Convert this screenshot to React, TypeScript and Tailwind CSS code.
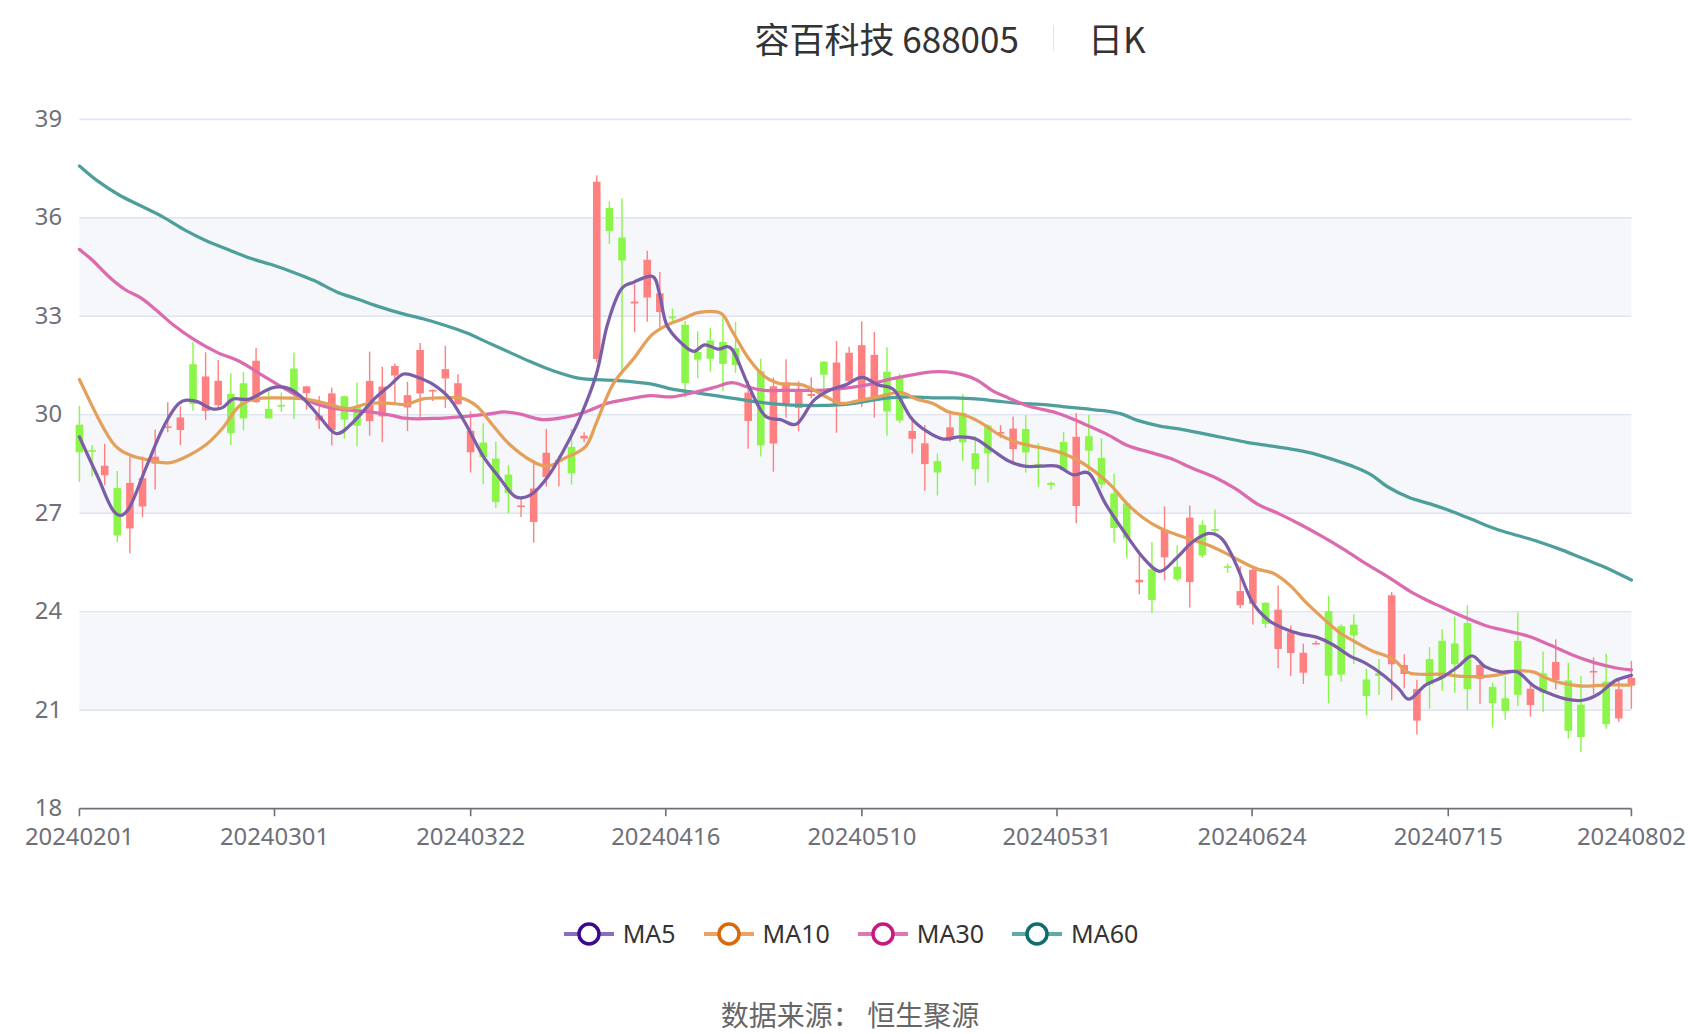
import React from "react";

type P = [number, number];
const ma5: P[] = [[73,403],[90,440],[105,472],[118,470],[135,430],[150,395],[165,372],[180,370],[195,377],[205,376],[215,368],[230,368],[250,358],[265,358],[280,368],[295,385],[310,400],[325,390],[345,368],[360,355],[372,345],[385,348],[400,355],[415,368],[430,392],[445,420],[460,440],[475,458],[490,456],[505,440],[520,415],[535,385],[550,345],[560,300],[572,268],[585,260],[602,255],[608,270],[615,300],[630,318],[640,324],[650,318],[662,322],[675,322],[690,355],[705,383],[720,387],[735,391],[750,370],[765,360],[780,355],[795,348],[810,355],[825,360],[840,385],[855,398],[870,405],[885,403],[900,405],[915,415],[930,425],[945,430],[960,430],[975,430],[990,438],[1005,437],[1020,465],[1040,495],[1055,515],[1070,527],[1085,515],[1100,500],[1115,492],[1128,498],[1140,520],[1155,555],[1170,572],[1185,580],[1200,585],[1215,588],[1230,595],[1245,605],[1260,612],[1275,622],[1290,635],[1300,645],[1315,632],[1330,625],[1345,615],[1358,605],[1370,615],[1385,620],[1400,620],[1415,633],[1430,640],[1445,645],[1460,646],[1475,640],[1490,628],[1505,623]];
const ma10: P[] = [[73,350],[90,385],[105,410],[120,420],[140,425],[155,427],[170,422],[190,410],[205,395],[220,375],[235,368],[255,367],[280,368],[300,372],[320,377],[340,372],[360,372],[375,373],[390,368],[410,367],[425,367],[440,375],[455,393],[470,410],[490,425],[505,430],[520,423],[540,412],[550,390],[565,355],[585,330],[600,310],[615,300],[630,294],[645,288],[665,289],[675,305],[690,330],[705,347],[720,354],[740,355],[760,365],[775,372],[790,370],[810,366],[830,362],[845,368],[860,372],[875,380],[890,383],[905,390],[920,400],[935,407],[950,411],[965,414],[980,418],[995,425],[1010,435],[1025,448],[1040,465],[1055,478],[1070,487],[1085,493],[1100,498],[1115,503],[1130,510],[1145,518],[1160,525],[1175,529],[1190,540],[1205,556],[1220,570],[1235,583],[1250,592],[1265,600],[1285,608],[1298,620],[1310,622],[1330,622],[1350,624],[1370,624],[1385,622],[1400,619],[1415,620],[1425,625],[1440,630],[1460,633],[1480,632],[1505,632]];
const ma30: P[] = [[73,230],[85,240],[100,255],[115,267],[130,275],[145,287],[160,300],[180,314],[200,325],[220,333],[240,345],[260,357],[280,368],[300,375],[320,378],[340,380],[360,383],[375,386],[400,386],[430,384],[450,382],[465,380],[480,382],[500,387],[520,385],[540,380],[560,372],[580,368],[600,365],[620,366],[640,362],[660,357],[675,353],[690,357],[705,360],[730,360],[755,360],[780,358],[800,355],[820,350],[840,346],[860,343],[880,344],[900,350],[915,360],[930,367],[950,375],[975,381],[1000,391],[1020,400],[1040,411],[1060,417],[1080,423],[1100,432],[1120,440],[1140,451],[1160,465],[1180,474],[1200,484],[1220,495],[1240,507],[1260,520],[1280,532],[1300,545],[1315,553],[1330,560],[1350,569],[1370,577],[1390,582],[1410,587],[1430,595],[1450,604],[1470,611],[1490,616],[1505,618]];
const ma60: P[] = [[73,153],[90,167],[110,180],[130,190],[150,200],[170,212],[190,222],[210,230],[230,238],[250,244],[270,251],[290,259],[310,269],[330,276],[350,283],[370,289],[390,294],[410,300],[430,307],[450,316],[470,325],[490,334],[510,342],[530,348],[545,350],[570,351],[600,354],[620,359],[640,362],[660,365],[680,368],[700,371],[720,373],[740,374],[760,374],[780,373],[800,370],[820,367],[840,366],[860,367],[880,367],[900,368],[920,370],[940,372],[960,373],[980,375],[1000,377],[1020,379],[1035,382],[1050,388],[1070,393],[1090,396],[1110,400],[1130,404],[1150,408],[1170,411],[1190,414],[1210,418],[1230,424],[1250,431],[1265,438],[1280,449],[1300,459],[1320,465],[1340,472],[1360,480],[1380,488],[1400,494],[1420,500],[1440,507],[1460,515],[1480,523],[1505,535]];

function smooth(p: P[]) {
  let d = `M${p[0][0]},${p[0][1]}`;
  for (let i = 0; i < p.length - 1; i++) {
    const p0 = p[Math.max(0, i - 1)], p1 = p[i], p2 = p[i + 1], p3 = p[Math.min(p.length - 1, i + 2)];
    const c1x = p1[0] + (p2[0] - p0[0]) / 6, c1y = p1[1] + (p2[1] - p0[1]) / 6;
    const c2x = p2[0] - (p3[0] - p1[0]) / 6, c2y = p2[1] - (p3[1] - p1[1]) / 6;
    d += ` C${c1x.toFixed(1)},${c1y.toFixed(1)} ${c2x.toFixed(1)},${c2y.toFixed(1)} ${p2[0]},${p2[1]}`;
  }
  return d;
}
function interp(p: P[], x: number) {
  for (let i = 0; i < p.length - 1; i++) {
    if (x <= p[i + 1][0]) {
      const t = (x - p[i][0]) / (p[i + 1][0] - p[i][0]);
      return p[i][1] + t * (p[i + 1][1] - p[i][1]);
    }
  }
  return p[p.length - 1][1];
}
const Y = (v: number) => 110 + (39 - v) * (636 / 21);
const V = (y: number) => 39 - (y - 110) / (636 / 21);

let s = 12345;
const rnd = () => { s = (s * 1103515245 + 12345) % 2147483648; return s / 2147483648; };
const N = 124;
const candles = Array.from({ length: N }, (_, i) => {
  const x = 73 + (i * 1432) / (N - 1);
  const base = V(interp(ma5, x));
  let o = base + (rnd() - 0.5) * 2.4;
  let c = base + (rnd() - 0.5) * 2.4;
  let h = Math.max(o, c) + rnd() * 0.9;
  let l = Math.min(o, c) - rnd() * 0.9;
  if (i === 41) { o = 31.7; c = 37.1; h = 37.3; l = 31.6; }
  if (i === 42) { o = 36.3; c = 35.6; h = 36.5; l = 35.2; }
  if (i === 43) { o = 35.4; c = 34.7; h = 36.6; l = 31.2; }
  if (i === 104) { o = 22.4; c = 24.5; h = 24.6; l = 21.3; }
  return { x, o, c, h, l };
});

const yTicks = [39, 36, 33, 30, 27, 24, 21, 18];
const xLabels: [number, string][] = [[73,"20240201"],[253,"20240301"],[434,"20240322"],[614,"20240416"],[795,"20240510"],[975,"20240531"],[1155,"20240624"],[1336,"20240715"],[1505,"20240802"]];

const lines = [
  { d: ma60, c: "#4e9e9c" },
  { d: ma30, c: "#db6aae" },
  { d: ma10, c: "#e4a05a" },
  { d: ma5, c: "#7b5ea7" },
];

const legend = [
  { n: "MA5", l: "#8a6cc0", c: "#3a0c8c" },
  { n: "MA10", l: "#eba264", c: "#d86a0c" },
  { n: "MA30", l: "#e076b4", c: "#c8197f" },
  { n: "MA60", l: "#62aaaa", c: "#0d6e6e" },
];

export default function App() {
  return (
    <div className="w-[1700px] h-[1034px] bg-white overflow-hidden" style={{ fontFamily: '"Noto Sans", "Noto Sans CJK SC", sans-serif' }}>
      <div className="h-[76px] flex items-center justify-center pl-[200px] text-[35px] text-[#333]" style={{ fontFamily: '"Noto Sans CJK SC", sans-serif' }}>
        <span>容百科技 688005</span>
        <span className="w-px h-[26px] bg-[#e5e5e5] mx-[34px]" />
        <span>日K</span>
      </div>
      <svg width="1700" height="802" viewBox="0 70 1568 740" className="block">
        {[[200, 292], [383, 474], [565, 656]].map(([a, b]) => (
          <rect key={a} x={73} y={a} width={1432} height={b - a} fill="#f5f7fb" />
        ))}
        {yTicks.slice(0, 7).map((v) => (
          <line key={v} x1={73} x2={1505} y1={Y(v)} y2={Y(v)} stroke="#e0e6f1" strokeWidth={1.5} />
        ))}
        {yTicks.map((v) => (
          <text key={v} x={57} y={Y(v) + 7} textAnchor="end" fontSize={22} fill="#6e7079">{v}</text>
        ))}
        <line x1={73} x2={1505} y1={746} y2={746} stroke="#6e7079" strokeWidth={1.5} />
        {xLabels.map(([x, t]) => (
          <g key={t}>
            <line x1={x} x2={x} y1={746} y2={753} stroke="#6e7079" strokeWidth={1.5} />
            <text x={x} y={780} textAnchor="middle" fontSize={22} fill="#6e7079">{t}</text>
          </g>
        ))}
        {candles.map((k, i) => {
          const up = k.c >= k.o;
          const col = up ? "#ff8080" : "#8cf54a";
          const top = Y(Math.max(k.o, k.c));
          const bot = Y(Math.min(k.o, k.c));
          return (
            <g key={i}>
              <line x1={k.x} x2={k.x} y1={Y(k.h)} y2={Y(k.l)} stroke={col} strokeWidth={1.3} />
              <rect x={k.x - 3.5} y={top} width={7} height={Math.max(1.5, bot - top)} fill={col} />
            </g>
          );
        })}
        {lines.map((l, i) => (
          <path key={i} d={smooth(l.d)} fill="none" stroke={l.c} strokeWidth={3} strokeLinecap="round" />
        ))}
      </svg>
      <div className="h-[112px] flex items-center justify-center gap-[26px]">
        {legend.map((g) => (
          <div key={g.n} className="flex items-center gap-[7px]">
            <svg width="54" height="28" viewBox="0 0 54 28">
              <line x1={2} x2={52} y1={14} y2={14} stroke={g.l} strokeWidth={4} />
              <circle cx={27} cy={14} r={10} fill="#fff" stroke={g.c} strokeWidth={3.5} />
            </svg>
            <span className="text-[25px] text-[#333]">{g.n}</span>
          </div>
        ))}
      </div>
      <div className="h-[44px] flex items-start justify-center text-[28px] text-[#666] pt-[3px]" style={{ fontFamily: '"Noto Sans CJK SC", sans-serif' }}>
        数据来源：&nbsp;恒生聚源
      </div>
    </div>
  );
}
